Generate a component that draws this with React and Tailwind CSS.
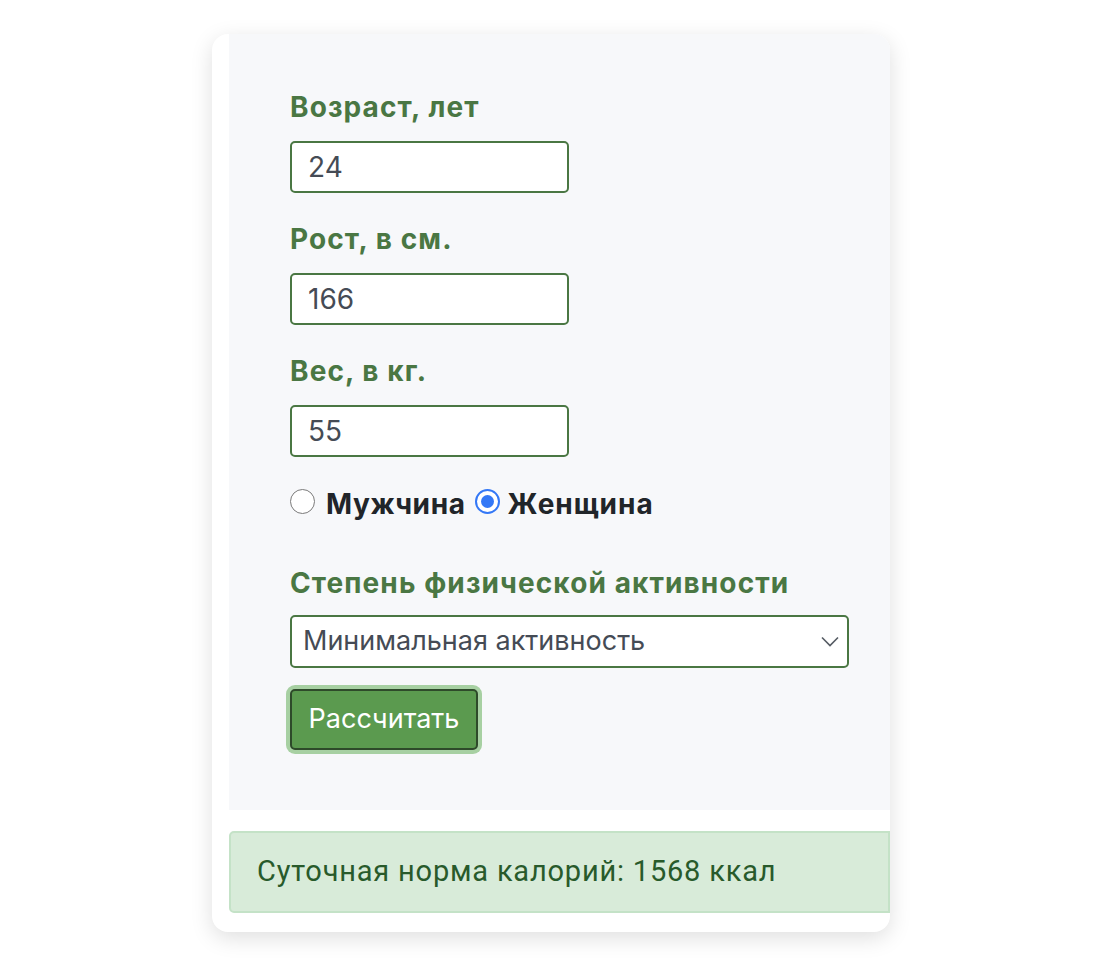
import React from "react";

export default function App() {
  const labelCls =
    "block text-[28px] leading-[32px] font-bold tracking-[1.1px] text-[#4a7743]";
  const inputCls =
    "w-[279px] h-[52px] bg-white border-2 border-[#4a7743] rounded-[5px] pl-[16px] text-[28px] text-[#454b55] flex items-center";
  return (
    <div
      className="min-h-screen bg-white flex justify-center pt-[34px]"
      style={{ fontFamily: "Inter, 'Noto Sans', sans-serif" }}
    >
      <div className="w-[678px] h-[898px] bg-white rounded-[16px] overflow-hidden pl-[17px] shadow-[0_6px_22px_rgba(0,0,0,0.13)]">
        <div className="bg-[#f7f8fa] pl-[61px] pt-[57px] pb-[60px]">
          <label className={labelCls + " mb-[18px]"}>Возраст, лет</label>
          <div className={inputCls}>24</div>
          <div className="h-[30px]" />
          <label className={labelCls + " mb-[18px]"}>Рост, в см.</label>
          <div className={inputCls}>166</div>
          <div className="h-[30px]" />
          <label className={labelCls + " mb-[18px]"}>Вес, в кг.</label>
          <div className={inputCls}>55</div>
          <div className="h-[31px]" />
          <div className="flex items-start text-[28px] leading-[32px] font-bold tracking-[0.6px] text-[#212529]">
            <span className="mt-[1px] w-[25px] h-[25px] rounded-full border-[1.5px] border-[#7a7a7a] bg-white mr-[11px]" />
            <span>Мужчина</span>
            <span className="mt-[1px] ml-[9px] w-[25px] h-[25px] rounded-full border-[2px] border-[#3478f6] bg-white mr-[8px] flex items-center justify-center">
              <span className="w-[13px] h-[13px] rounded-full bg-[#3478f6]" />
            </span>
            <span className="tracking-[1px]">Женщина</span>
          </div>
          <div className="h-[47px]" />
          <label className={labelCls + " mb-[16px]"}>
            Степень физической активности
          </label>
          <div className="w-[559px] h-[53px] bg-white border-2 border-[#4a7743] rounded-[5px] pl-[11px] pr-[8px] text-[27px] text-[#454b55] flex items-center justify-between">
            <span>Минимальная активность</span>
            <svg width="18" height="11" viewBox="0 0 18 11" fill="none">
              <path d="M1 1.5 L9 9.5 L17 1.5" stroke="#555b63" strokeWidth="1.6" />
            </svg>
          </div>
          <div className="h-[21px]" />
          <div className="inline-flex items-center justify-center w-[188px] h-[61px] bg-[#5b9a4f] border-2 border-[#2e4a2a] rounded-[5px] text-white text-[27px] shadow-[0_0_0_4px_#a7d0a2]">
            Рассчитать
          </div>
        </div>
        <div className="h-[21px]" />
        <div
          className="h-[82px] bg-[#d8ebd9] border-2 border-[#c4e2c7] rounded-l-[5px] pl-[26px] flex items-center text-[29px] tracking-[0.8px] text-[#285a2b]"
          style={{ fontFamily: "Roboto, 'Noto Sans', sans-serif" }}
        >
          Суточная норма калорий: 1568 ккал
        </div>
      </div>
    </div>
  );
}
